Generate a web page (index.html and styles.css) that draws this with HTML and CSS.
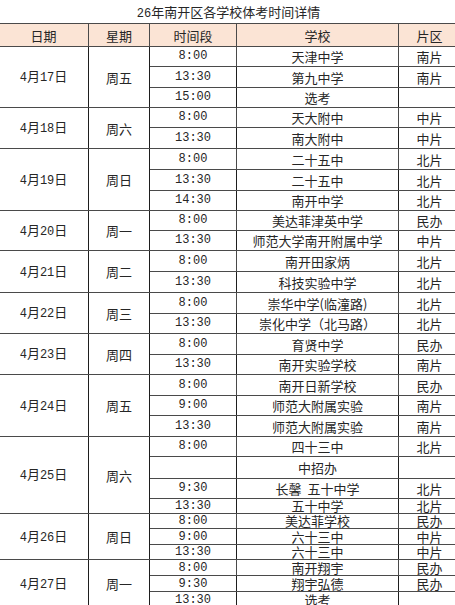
FILE: index.html
```html
<!DOCTYPE html>
<html lang="zh">
<head>
<meta charset="utf-8">
<link rel="stylesheet" href="styles.css">
</head>
<body>
<div class="sheet">
  <div class="title"><span class="n">26</span>年南开区各学校体考时间详情</div>
  <table class="grid">
    <colgroup>
      <col class="c-date"><col class="c-week"><col class="c-time"><col class="c-school"><col class="c-area">
    </colgroup>
    <thead>
      <tr class="head"><th>日期</th><th>星期</th><th>时间段</th><th>学校</th><th>片区</th></tr>
    </thead>
    <tbody>
      <tr class="h20"><td rowspan="3"><span class="n">4</span>月<span class="n">17</span>日</td><td rowspan="3">周五</td><td class="t">8:00</td><td>天津中学</td><td>南片</td></tr>
      <tr class="h21"><td class="t">13:30</td><td>第九中学</td><td>南片</td></tr>
      <tr class="h20"><td class="t">15:00</td><td>选考</td><td></td></tr>

      <tr class="h20"><td rowspan="2"><span class="n">4</span>月<span class="n">18</span>日</td><td rowspan="2">周六</td><td class="t">8:00</td><td>天大附中</td><td>中片</td></tr>
      <tr class="h21"><td class="t">13:30</td><td>南大附中</td><td>中片</td></tr>

      <tr class="h21"><td rowspan="3"><span class="n">4</span>月<span class="n">19</span>日</td><td rowspan="3">周日</td><td class="t">8:00</td><td>二十五中</td><td>北片</td></tr>
      <tr class="h21"><td class="t">13:30</td><td>二十五中</td><td>北片</td></tr>
      <tr class="h20"><td class="t">14:30</td><td>南开中学</td><td>北片</td></tr>

      <tr class="h20"><td rowspan="2"><span class="n">4</span>月<span class="n">20</span>日</td><td rowspan="2">周一</td><td class="t">8:00</td><td>美达菲津英中学</td><td>民办</td></tr>
      <tr class="h20"><td class="t">13:30</td><td>师范大学南开附属中学</td><td>中片</td></tr>

      <tr class="h21"><td rowspan="2"><span class="n">4</span>月<span class="n">21</span>日</td><td rowspan="2">周二</td><td class="t">8:00</td><td>南开田家炳</td><td>北片</td></tr>
      <tr class="h21"><td class="t">13:30</td><td>科技实验中学</td><td>北片</td></tr>

      <tr class="h21"><td rowspan="2"><span class="n">4</span>月<span class="n">22</span>日</td><td rowspan="2">周三</td><td class="t">8:00</td><td>崇华中学(临潼路)</td><td>北片</td></tr>
      <tr class="h20"><td class="t">13:30</td><td>崇化中学（北马路）</td><td>北片</td></tr>

      <tr class="h21"><td rowspan="2"><span class="n">4</span>月<span class="n">23</span>日</td><td rowspan="2">周四</td><td class="t">8:00</td><td>育贤中学</td><td>民办</td></tr>
      <tr class="h20"><td class="t">13:30</td><td>南开实验学校</td><td>南片</td></tr>

      <tr class="h21"><td rowspan="3"><span class="n">4</span>月<span class="n">24</span>日</td><td rowspan="3">周五</td><td class="t">8:00</td><td>南开日新学校</td><td>民办</td></tr>
      <tr class="h20"><td class="t">9:00</td><td>师范大附属实验</td><td>南片</td></tr>
      <tr class="h21"><td class="t">13:30</td><td>师范大附属实验</td><td>南片</td></tr>

      <tr class="h20"><td rowspan="4"><span class="n">4</span>月<span class="n">25</span>日</td><td rowspan="4">周六</td><td class="t">8:00</td><td>四十三中</td><td>北片</td></tr>
      <tr class="h22"><td class="t"></td><td>中招办</td><td></td></tr>
      <tr class="h20"><td class="t">9:30</td><td>长馨&nbsp;&nbsp;五十中学</td><td>北片</td></tr>
      <tr class="h15"><td class="t">13:30</td><td>五十中学</td><td>北片</td></tr>

      <tr class="h15"><td rowspan="3"><span class="n">4</span>月<span class="n">26</span>日</td><td rowspan="3">周日</td><td class="t">8:00</td><td>美达菲学校</td><td>民办</td></tr>
      <tr class="h16"><td class="t">9:00</td><td>六十三中</td><td>中片</td></tr>
      <tr class="h15"><td class="t">13:30</td><td>六十三中</td><td>中片</td></tr>

      <tr class="h16"><td rowspan="3"><span class="n">4</span>月<span class="n">27</span>日</td><td rowspan="3">周一</td><td class="t">8:00</td><td>南开翔宇</td><td>民办</td></tr>
      <tr class="h16"><td class="t">9:30</td><td>翔宇弘德</td><td>民办</td></tr>
      <tr class="h16"><td class="t">13:30</td><td>选考</td><td></td></tr>
    </tbody>
  </table>
</div>
</body>
</html>
```

FILE: styles.css
```css
html, body {
  margin: 0;
  padding: 0;
  background: #ffffff;
  overflow: hidden;
}

body {
  font-family: "Noto Sans CJK SC", "Noto Sans", sans-serif;
  color: #262626;
  font-size: 13px;
}

.sheet {
  width: 455px;
  height: 605px;
  overflow: hidden;
}

.title {
  height: 23px;
  line-height: 24px;
  text-align: center;
  font-size: 13px;
  padding-left: 2px;
  box-sizing: border-box;
}

.n {
  font-family: "Liberation Mono", "DejaVu Sans Mono", monospace;
  font-size: 12px;
}

.grid {
  border-collapse: collapse;
  table-layout: fixed;
  width: 462px;
  margin-left: -2px;
}

.c-date { width: 90px; }
.c-week { width: 61px; }
.c-time { width: 87px; }
.c-school { width: 162px; }
.c-area { width: 62px; }

.grid th,
.grid td {
  border: 1px solid #4a4a4a;
  padding: 0;
  text-align: center;
  vertical-align: middle;
  font-weight: normal;
  line-height: 13px;
  white-space: nowrap;
}

.grid td:first-child,
.grid td:nth-child(2) {
  border-right-color: #1e1e1e;
}

.head th {
  background: #fbe4d5;
  height: 22px;
  font-size: 13px;
}

.t {
  font-family: "Liberation Mono", "DejaVu Sans Mono", monospace;
  font-size: 12px;
  border-left-color: #1e1e1e;
}

.h15 { height: 15px; }
.h16 { height: 16px; }
.h20 { height: 20px; }
.h21 { height: 21px; }
.h22 { height: 22px; }
.h15 td, .h16 td { line-height: 12px; }
```
